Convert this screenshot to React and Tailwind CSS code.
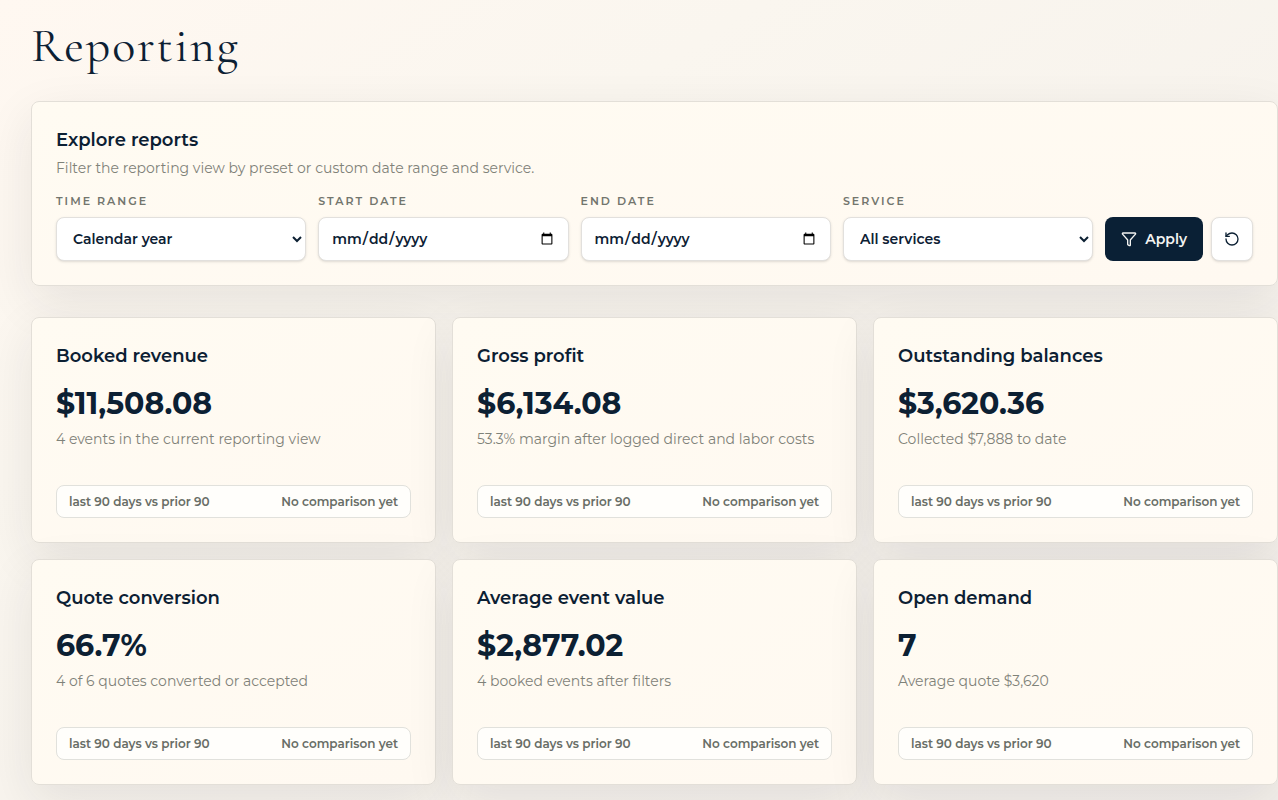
import React from 'react';
import { Funnel, RotateCcw } from 'lucide-react';

const metrics = [
  { title: 'Booked revenue', value: '$11,508.08', note: '4 events in the current reporting view' },
  { title: 'Gross profit', value: '$6,134.08', note: '53.3% margin after logged direct and labor costs' },
  { title: 'Outstanding balances', value: '$3,620.36', note: 'Collected $7,888 to date' },
  { title: 'Quote conversion', value: '66.7%', note: '4 of 6 quotes converted or accepted' },
  { title: 'Average event value', value: '$2,877.02', note: '4 booked events after filters' },
  { title: 'Open demand', value: '7', note: 'Average quote $3,620' },
];

const labelClass = 'block text-[11px] leading-4 font-semibold tracking-[2px] uppercase text-[#72756d] mb-2';
const controlClass = 'block w-full h-11 rounded-lg border border-[#e2e0dd] bg-white text-sm font-semibold text-[#0c2033] shadow-sm';
const cardClass = 'rounded-lg border border-[#e3dfd8] bg-linear-to-br from-[#fffbf2] to-[#fff9f1] p-6 shadow-[0_16px_50px_rgba(32,32,40,0.09)]';

function SelectField({ id, label, options }) {
  return (
    <div className="min-w-0 flex-1">
      <label htmlFor={id} className={labelClass}>{label}</label>
      <select id={id} className={`${controlClass} pl-3`}>
        {options.map((option) => (
          <option key={option}>{option}</option>
        ))}
      </select>
    </div>
  );
}

function DateField({ id, label }) {
  return (
    <div className="min-w-0 flex-1">
      <label htmlFor={id} className={labelClass}>{label}</label>
      <input id={id} type="date" className={`${controlClass} px-3`} />
    </div>
  );
}

function MetricCard({ title, value, note }) {
  return (
    <article className={cardClass}>
      <h2 className="text-lg leading-7 font-semibold text-[#0c2033]">{title}</h2>
      <p className="mt-[14px] text-3xl leading-10 font-bold text-[#0c2033]">{value}</p>
      <p className="mt-[5px] text-sm leading-5 text-[#7f8279]">{note}</p>
      <div className="mt-9 flex h-[33px] items-center justify-between rounded-lg border border-[#e1e1dc] bg-[#fffefb] px-3 text-xs font-semibold text-[#686d66]">
        <span>last 90 days vs prior 90</span>
        <span>No comparison yet</span>
      </div>
    </article>
  );
}

export default function App() {
  return (
    <main className="min-h-screen bg-linear-to-br from-[#fff8f1] via-[#faf6ef] via-30% to-[#f3efea] pt-4 pb-4 pl-[31px] font-['Montserrat',Inter,sans-serif]">
      <h1 className="font-['Cormorant_Garamond','Liberation_Serif',serif] text-5xl leading-[60px] tracking-[0.04em] text-[#0c2033]">Reporting</h1>

      {/* Filters */}
      <section className={`mt-[25px] ${cardClass}`}>
        <h2 className="text-lg leading-7 font-semibold text-[#0c2033]">Explore reports</h2>
        <p className="text-sm leading-7 text-[#7f8279]">Filter the reporting view by preset or custom date range and service.</p>
        <form className="mt-[11px] flex items-end gap-3" onSubmit={(e) => e.preventDefault()}>
          <SelectField id="range" label="Time range" options={['Calendar year', 'Last 90 days', 'Custom']} />
          <DateField id="start" label="Start date" />
          <DateField id="end" label="End date" />
          <SelectField id="service" label="Service" options={['All services']} />
          <div className="flex gap-2">
            <button type="submit" className="flex h-11 items-center gap-2 rounded-lg bg-[#0a2035] px-4 text-sm font-semibold text-[#f4f4f2]">
              <Funnel className="h-4 w-4" />
              Apply
            </button>
            <button type="reset" aria-label="Reset filters" className="flex h-11 w-[42px] items-center justify-center rounded-lg border border-[#e2e0dd] bg-white text-[#0c2033] shadow-sm">
              <RotateCcw className="h-4 w-4" />
            </button>
          </div>
        </form>
      </section>

      {/* Metrics */}
      <section className="mt-[31px] grid grid-cols-3 gap-4">
        {metrics.map((metric) => (
          <MetricCard key={metric.title} {...metric} />
        ))}
      </section>
    </main>
  );
}
